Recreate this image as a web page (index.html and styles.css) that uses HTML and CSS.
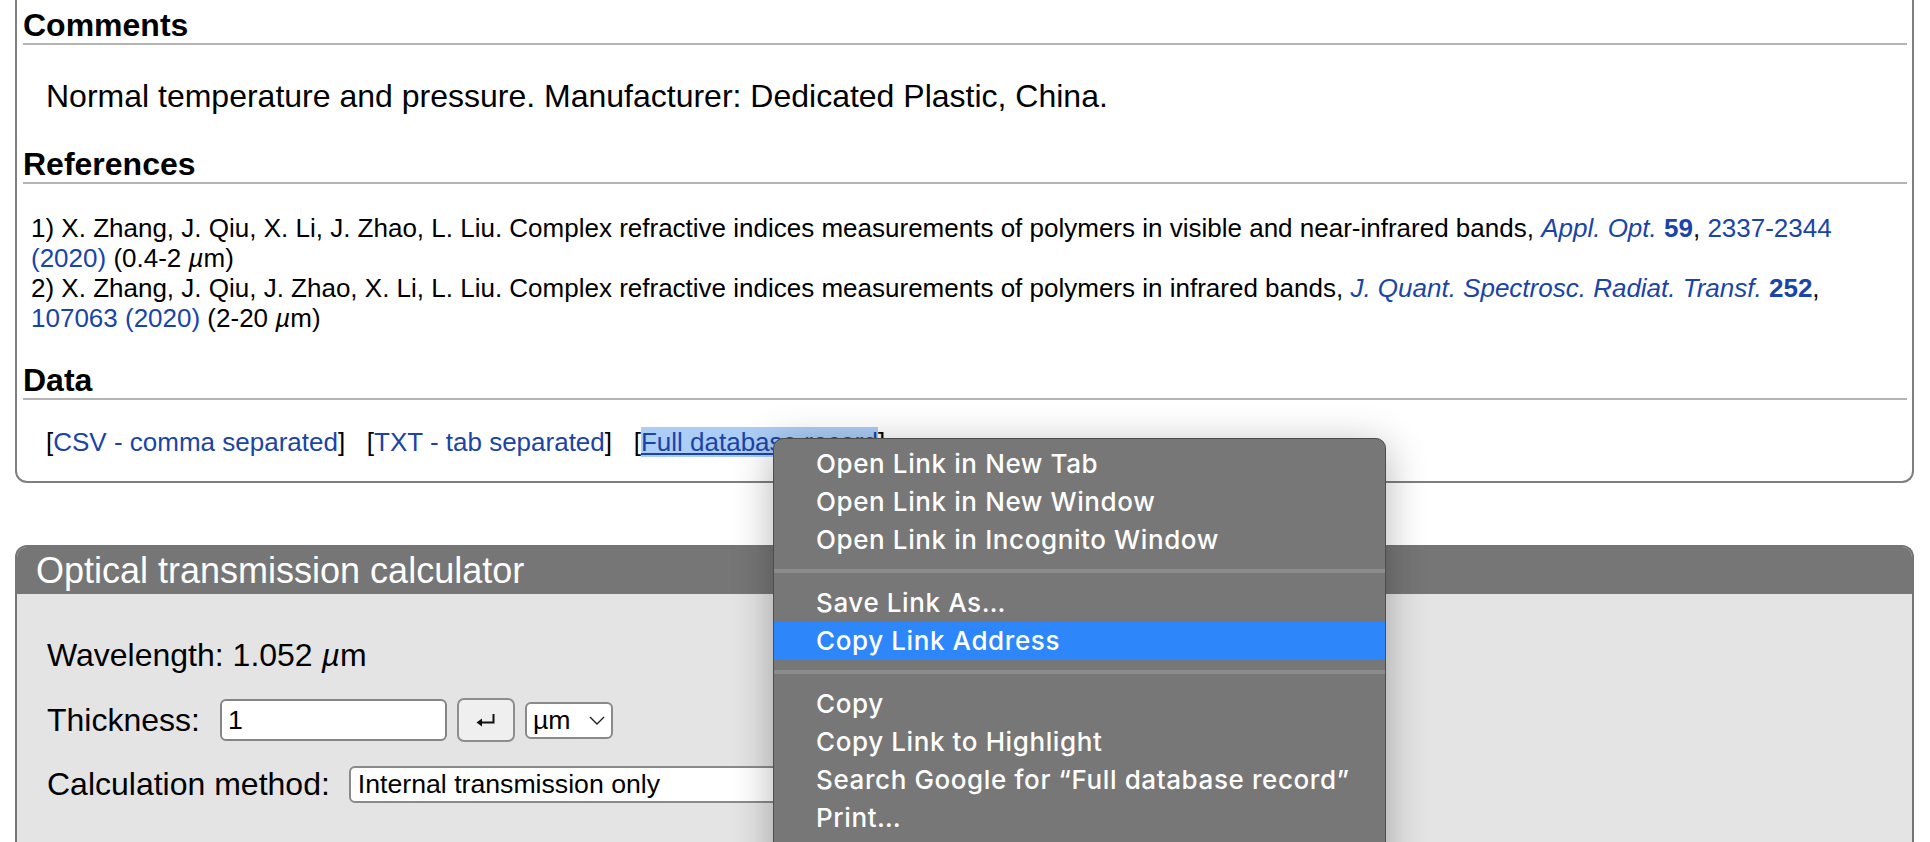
FILE: index.html
```html
<!DOCTYPE html>
<html lang="en">
<head>
<meta charset="utf-8">
<title>Material record</title>
<link rel="stylesheet" href="styles.css">
</head>
<body>
<div class="page">
  <section class="card">
    <h2 class="sec-title">Comments</h2>
    <p class="comment">Normal temperature and pressure. Manufacturer: Dedicated Plastic, China.</p>
    <h2 class="sec-title">References</h2>
    <div class="refs">
      <div class="ref">1) X. Zhang, J. Qiu, X. Li, J. Zhao, L. Liu. Complex refractive indices measurements of polymers in visible and near-infrared bands, <a href="#"><i>Appl. Opt.</i> <b>59</b></a>, <a href="#">2337-2344 (2020)</a> (0.4-2 <i>µ</i>m)</div>
      <div class="ref">2) X. Zhang, J. Qiu, J. Zhao, X. Li, L. Liu. Complex refractive indices measurements of polymers in infrared bands, <a href="#"><i>J. Quant. Spectrosc. Radiat. Transf.</i> <b>252</b></a>, <a href="#">107063 (2020)</a> (2-20 <i>µ</i>m)</div>
    </div>
    <h2 class="sec-title">Data</h2>
    <p class="data-links">[<a href="#">CSV - comma separated</a>]&nbsp;&nbsp; [<a href="#">TXT - tab separated</a>]&nbsp;&nbsp; [<a href="#" class="selected">Full database record</a>]</p>
  </section>

  <section class="calc">
    <div class="calc-head">Optical transmission calculator</div>
    <div class="calc-body">
      <div class="row">Wavelength: 1.052 <i>µ</i>m</div>
      <div class="row row-controls">
        <span class="label">Thickness:</span>
        <span class="text-input">1</span>
        <span class="enter-btn">
          <svg width="22" height="14" viewBox="0 0 22 14"><path d="M18.5 1 V9.5 H5" fill="none" stroke="#111" stroke-width="2"/><path d="M1.5 9.5 L7 5.5 L7 13.5 Z" fill="#111"/></svg>
        </span>
        <span class="unit-select">µm
          <svg class="chev" width="16" height="9" viewBox="0 0 16 9"><path d="M1 1 L8 8 L15 1" fill="none" stroke="#222" stroke-width="1.4"/></svg>
        </span>
      </div>
      <div class="row row-controls">
        <span class="label">Calculation method:</span>
        <span class="method-select">Internal transmission only</span>
      </div>
    </div>
  </section>
</div>

<div class="menu">
  <div class="menu-item">Open Link in New Tab</div>
  <div class="menu-item">Open Link in New Window</div>
  <div class="menu-item">Open Link in Incognito Window</div>
  <div class="menu-sep"></div>
  <div class="menu-item">Save Link As…</div>
  <div class="menu-item active">Copy Link Address</div>
  <div class="menu-sep"></div>
  <div class="menu-item">Copy</div>
  <div class="menu-item">Copy Link to Highlight</div>
  <div class="menu-item">Search Google for “Full database record”</div>
  <div class="menu-item">Print…</div>
</div>
</body>
</html>
```
FILE: styles.css
```css
html, body {
  margin: 0;
  padding: 0;
  overflow: hidden;
  background: #fff;
}
body {
  font-family: "Liberation Sans", Arial, Helvetica, sans-serif;
  color: #000;
  width: 1930px;
  height: 842px;
  position: relative;
}
a {
  color: #1a44a8;
  text-decoration: none;
}
.page {
  padding: 0 16px 0 15px;
}
.card {
  border: 2px solid #7f7f7f;
  border-top: 0;
  border-radius: 0 0 12px 12px;
  padding: 7px 5px 24px 6px;
}
.sec-title {
  font-size: 32px;
  line-height: 36px;
  font-weight: bold;
  margin: 0;
  border-bottom: 2px solid #b4b4b4;
}
.comment {
  font-size: 32px;
  line-height: 37px;
  margin: 33px 0 31px 23px;
}
.refs {
  font-size: 26px;
  line-height: 30px;
  margin: 29px 0 29px 8px;
}
.data-links {
  font-size: 26px;
  line-height: 30px;
  margin: 27px 0 0 23px;
}
.data-links .selected {
  background: #accdf5;
  text-decoration: underline;
}
.calc {
  margin-top: 62px;
  border: 2px solid #757575;
  border-bottom: 0;
  border-radius: 12px 12px 0 0;
  background: #e4e4e4;
  overflow: hidden;
  height: 300px;
}
.calc-head {
  background: #767676;
  color: #fff;
  font-size: 36px;
  line-height: 47px;
  padding-left: 19px;
}
.calc-body {
  padding: 43px 0 0 30px;
  display: flex;
  flex-direction: column;
  gap: 24px;
}
.row {
  font-size: 32px;
  line-height: 37px;
}
.row-controls {
  display: flex;
  align-items: center;
}
.text-input {
  box-sizing: border-box;
  width: 227px;
  height: 42px;
  margin-left: 20px;
  border: 2px solid #858585;
  border-radius: 6px;
  background: #fff;
  font-size: 26.67px;
  line-height: 38px;
  padding: 0 6px;
}
.enter-btn {
  box-sizing: border-box;
  width: 58px;
  height: 44px;
  margin-left: 10px;
  border: 2px solid #8e8e8e;
  border-radius: 7px;
  background: #efefef;
  display: flex;
  align-items: center;
  justify-content: center;
}
.unit-select {
  box-sizing: border-box;
  width: 88px;
  height: 37px;
  margin-left: 10px;
  border: 2px solid #8a8a8a;
  border-radius: 6px;
  background: #fff;
  font-size: 26.67px;
  line-height: 33px;
  padding: 0 6px;
  display: flex;
  align-items: center;
  justify-content: space-between;
}
.method-select {
  box-sizing: border-box;
  width: 520px;
  height: 37px;
  margin-left: 19px;
  border: 2px solid #8a8a8a;
  border-radius: 6px;
  background: #fff;
  font-size: 26.67px;
  line-height: 33px;
  padding: 0 7px;
}
.menu {
  position: absolute;
  left: 773px;
  top: 438px;
  width: 613px;
  height: 440px;
  box-sizing: border-box;
  background: #777;
  border: 1px solid #4d4d4d;
  border-radius: 10px;
  box-shadow: 0 8px 40px rgba(0, 0, 0, 0.3);
  padding-top: 6px;
  font-family: Inter, "Noto Sans", sans-serif;
  font-size: 26px;
  font-weight: 500;
  letter-spacing: 0.6px;
  color: #fff;
}
.menu-item {
  height: 38px;
  line-height: 38px;
  padding-left: 42px;
  white-space: nowrap;
}
.menu-item.active {
  background: #2e87fa;
}
.menu-sep {
  height: 4px;
  margin: 10px 0 11px;
  background: #8b8b8b;
}
```
